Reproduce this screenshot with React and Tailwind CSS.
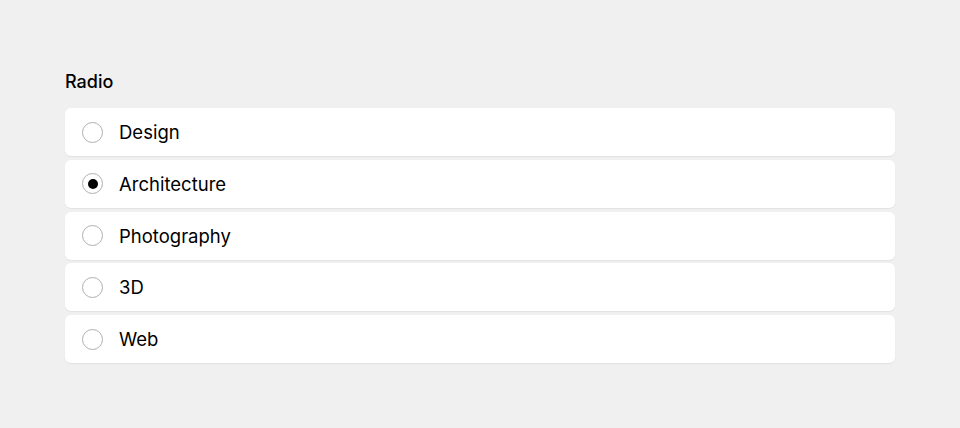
import { useState } from 'react'

const options = ['Design', 'Architecture', 'Photography', '3D', 'Web']

export default function App() {
  const [selected, setSelected] = useState('Architecture')

  return (
    <div className="min-h-[428px] w-full bg-[#f0f0f0] px-[65px] pt-[71px] font-['Inter',sans-serif] text-black">
      <h2 className="mb-[15px] text-[18px] font-medium leading-[22px]">Radio</h2>
      <div className="flex w-[830px] flex-col gap-[3.75px]">
        {options.map((opt) => (
          <label
            key={opt}
            onClick={() => setSelected(opt)}
            className="flex h-[48px] cursor-pointer items-center gap-[16px] rounded-[6px] bg-white pl-[17px] pr-[16px] shadow-[0_1px_1px_rgba(0,0,0,0.06)]"
          >
            <span className="flex h-[21px] w-[21px] items-center justify-center rounded-full border-[1.5px] border-[#b0b0b0] bg-white">
              {selected === opt && <span className="h-[10px] w-[10px] rounded-full bg-black" />}
            </span>
            <span className="text-[18.5px] leading-[22px]">{opt}</span>
          </label>
        ))}
      </div>
    </div>
  )
}
